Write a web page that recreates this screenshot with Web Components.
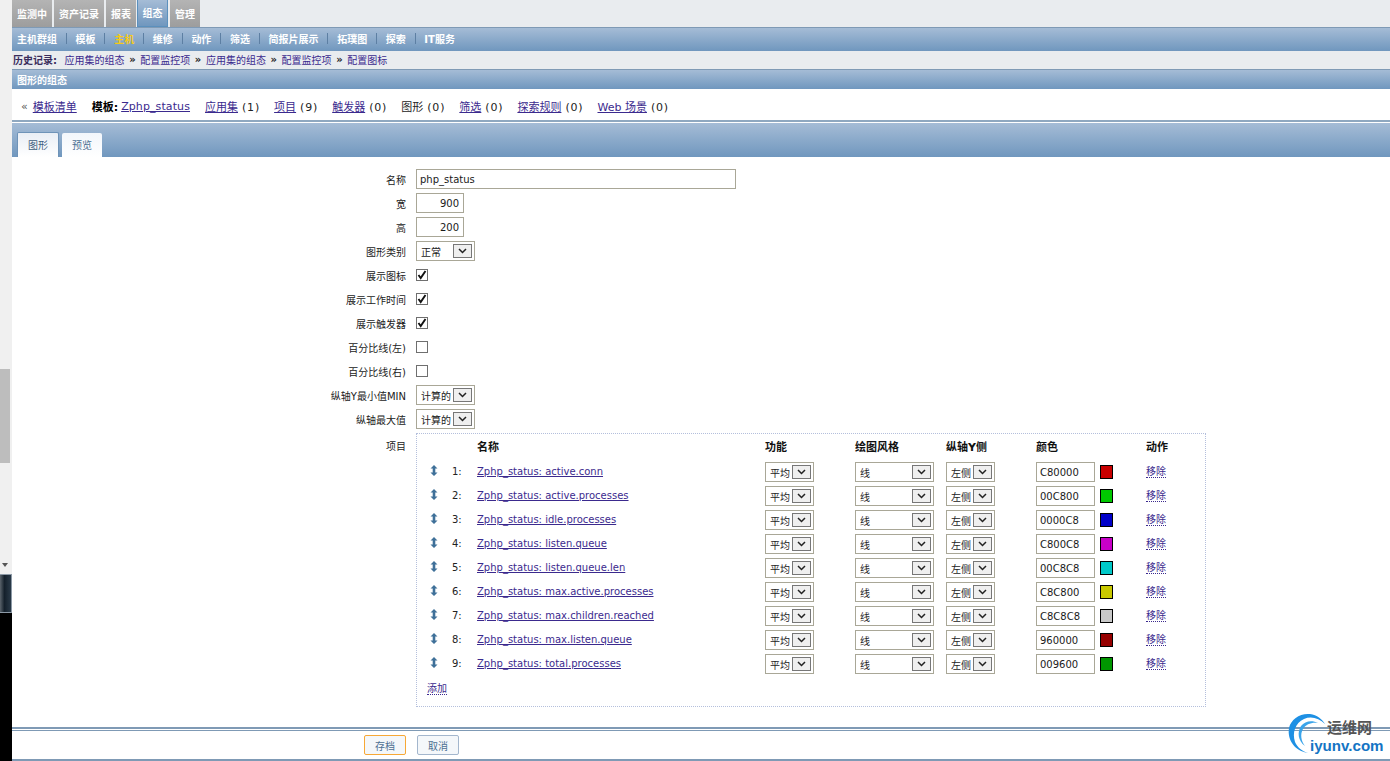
<!DOCTYPE html>
<html lang="zh">
<head>
<meta charset="utf-8">
<title>图形的组态</title>
<style>
  html, body { margin: 0; height: 100%; overflow: hidden; background: #fff; }
  body { font: 10px "DejaVu Sans", "Noto Sans CJK SC", sans-serif; color: #1a1a1a; }
</style>
</head>
<body>
<z-page></z-page>
<script>
const FONT = '"DejaVu Sans", "Noto Sans CJK SC", sans-serif';
const LINK = '#3b2a8e';
const BAR = 'linear-gradient(#a5bcd6, #7097be)';
const COLS = '25px 25px 288px 90px 91px 90px 110px 46px';

class ZStrip extends HTMLElement {
  connectedCallback() {
    this.attachShadow({ mode: 'open' });
    this.shadowRoot.innerHTML = `
      <style>
        :host { display: flex; flex-direction: column; width: 12px; height: 761px; background: #f0f0f0; flex: none; }
        .gap { height: 369px; }
        .thumb { width: 10px; height: 94px; background: #bdbdbd; }
        .rest { height: 111px; display: flex; align-items: flex-end; justify-content: center; padding-bottom: 6px; box-sizing: border-box; }
        .arrow { width: 0; height: 0; border: 3.5px solid transparent; border-top: 4px solid #555; border-bottom: 0; margin-bottom: 1px; margin-right: 3px; }
        .shot { height: 39px; box-sizing: border-box; border: 1px solid #8c99a6; border-left: 0; background: linear-gradient(90deg, #5a636b, #14202b 40%, #2a3a48); width: 12px; }
        .black { flex: 1; background: #000; }
      </style>
      <div class="gap"></div>
      <div class="thumb"></div>
      <div class="rest"><div class="arrow"></div></div>
      <div class="shot"></div>
      <div class="black"></div>`;
  }
}

class ZTopnav extends HTMLElement {
  connectedCallback() {
    const tabs = [['监测中', 40], ['资产记录', 50], ['报表', 30], ['组态', 31, 1], ['管理', 30]];
    this.attachShadow({ mode: 'open' });
    this.shadowRoot.innerHTML = `
      <style>
        :host { display: flex; gap: 1px; height: 27px; background: #e9ecef; font: bold 10px ${FONT}; color: #fff; }
        div { height: 27px; padding-bottom: 1px; display: flex; align-items: center; justify-content: center; background: linear-gradient(#b4b4b4, #9d9d9d); margin-right: 1px; box-sizing: border-box; }
        .on { background: linear-gradient(#a5bcd6, #7097be); border: 1px solid #5b90bd; border-top: 0; margin-right: 1px; margin-left: -1px; }
      </style>
      ${tabs.map(t => `<div class="${t[2] ? 'on' : ''}" style="width:${t[1]}px">${t[0]}</div>`).join('')}`;
  }
}

class ZSubnav extends HTMLElement {
  connectedCallback() {
    const items = ['主机群组', '模板', '主机', '维修', '动作', '筛选', '简报片展示', '拓璞图', '探索', 'IT服务'];
    this.attachShadow({ mode: 'open' });
    this.shadowRoot.innerHTML = `
      <style>
        :host { display: flex; align-items: center; height: 24px; box-sizing: border-box; padding: 0 0 2px 5px; background: ${BAR}; border-top: 1px solid #7f9ab5; font: bold 10px ${FONT}; color: #fff; }
        i { width: 1px; height: 11px; background: #5d7fa3; margin: 0 8.8px; }
        .on { color: #f6c915; }
      </style>
      ${items.map((t, n) => `${n ? '<i></i>' : ''}<span class="${t === '主机' ? 'on' : ''}">${t}</span>`).join('')}`;
  }
}

class ZCrumbs extends HTMLElement {
  connectedCallback() {
    const path = ['应用集的组态', '配置监控项', '应用集的组态', '配置监控项', '配置图标'];
    this.attachShadow({ mode: 'open' });
    this.shadowRoot.innerHTML = `
      <style>
        :host { display: flex; align-items: center; gap: 4.6px; height: 18px; box-sizing: border-box; padding: 0 0 2px 1px; background: #e9ecef; font: 10px ${FONT}; color: ${LINK}; }
        b { color: #222; }
        .history { color: #3a2d5c; margin-right: 3px; }
      </style>
      <b class="history">历史记录:</b>
      ${path.map((t, n) => `${n ? '<b>»</b>' : ''}<span>${t}</span>`).join('')}`;
  }
}

class ZTitlebar extends HTMLElement {
  connectedCallback() {
    this.attachShadow({ mode: 'open' });
    this.shadowRoot.innerHTML = `
      <style>
        :host { display: flex; align-items: center; height: 20px; box-sizing: border-box; padding: 0 0 1px 5px; background: ${BAR}; border-top: 1px solid #7f9ab5; font: bold 10px ${FONT}; color: #fff; }
      </style>
      <slot></slot>`;
  }
}

class ZLinks extends HTMLElement {
  connectedCallback() {
    const items = [['应用集', 1, 1], ['项目', 9, 1], ['触发器', 0, 1], ['图形', 0, 0], ['筛选', 0, 1], ['探索规则', 0, 1], ['Web 场景', 0, 1]];
    this.attachShadow({ mode: 'open' });
    this.shadowRoot.innerHTML = `
      <style>
        :host { display: flex; align-items: center; height: 33px; box-sizing: border-box; padding: 3px 0 0 9px; border-bottom: 2px solid #8fa8c0; background: #fff; font: 11px ${FONT}; color: #222; }
        a { color: ${LINK}; text-decoration: underline; }
        .back { color: #555; margin-right: 5px; }
        .host { margin: 0 3px 0 15px; font-weight: bold; color: #000; }
        .name { letter-spacing: .1px; }
        .item { margin-left: 15px; white-space: nowrap; }
        .item + .item { margin-left: 14.1px; }
        .item a, .item span { margin-right: 4px; }
        .count { letter-spacing: .8px; font-weight: normal; }
      </style>
      <span class="back">«</span><a>模板清单</a>
      <span class="host">模板:</span><a class="name">Zphp_status</a>
      ${items.map(i => `<div class="item">${i[2] ? `<a>${i[0]}</a>` : `<span>${i[0]}</span>`}<b class="count">(${i[1]})</b></div>`).join('')}`;
  }
}

class ZTabs extends HTMLElement {
  connectedCallback() {
    this.attachShadow({ mode: 'open' });
    this.shadowRoot.innerHTML = `
      <style>
        :host { display: flex; align-items: flex-end; gap: 3px; height: 34px; box-sizing: border-box; margin-top: 1px; padding-left: 5px; background: ${BAR}; font: 10px ${FONT}; }
        div { display: flex; align-items: center; justify-content: center; height: 24px; width: 40px; padding-bottom: 1px; box-sizing: border-box; background: linear-gradient(#f2f6fb, #fff); color: #4c6f92; border-radius: 2px 2px 0 0; }
        .on { height: 25px; width: 42px; background: linear-gradient(#e9eef5, #fff); border: 1px solid #6e93b8; border-bottom: 0; color: #3f5f80; }
      </style>
      <div class="on">图形</div><div>预览</div>`;
  }
}

class ZField extends HTMLElement {
  connectedCallback() {
    this.attachShadow({ mode: 'open' });
    this.shadowRoot.innerHTML = `
      <style>
        :host { display: grid; grid-template-columns: 394px 1fr; column-gap: 10px; align-items: center; min-height: 20px; font: 10px ${FONT}; color: #222; }
        :host([top]) { align-items: start; }
        :host([top]) .label { padding-top: 5px; }
        .label { text-align: right; white-space: nowrap; }
      </style>
      <div class="label">${this.getAttribute('label')}</div>
      <div><slot></slot></div>`;
  }
}

class ZInput extends HTMLElement {
  connectedCallback() {
    const right = this.hasAttribute('right');
    this.attachShadow({ mode: 'open' });
    this.shadowRoot.innerHTML = `
      <style>
        :host { display: block; box-sizing: border-box; height: 20px; width: ${this.getAttribute('w')}px; padding: 0 4px 0 3px; border: 1px solid #a9a797; background: #fff; font: 10px/20px ${FONT}; color: #1a1a1a; text-align: ${right ? 'right' : 'left'}; }
      </style>
      <slot></slot>`;
  }
}

class ZSelect extends HTMLElement {
  connectedCallback() {
    this.attachShadow({ mode: 'open' });
    this.shadowRoot.innerHTML = `
      <style>
        :host { display: flex; align-items: center; justify-content: space-between; box-sizing: border-box; height: 20px; width: ${this.getAttribute('w')}px; padding: 0 2px 0 4px; border: 1px solid #a9a797; background: #fff; font: 10px ${FONT}; color: #222; }
        .btn { display: flex; align-items: center; justify-content: center; width: 19px; height: 14px; box-sizing: border-box; border: 1px solid #777; background: #efefef; flex: none; }
      </style>
      <slot></slot>
      <div class="btn"><svg width="9" height="6" viewBox="0 0 9 6"><path d="M1 1l3.5 3.5L8 1" fill="none" stroke="#222" stroke-width="1.5"/></svg></div>`;
  }
}

class ZCheck extends HTMLElement {
  connectedCallback() {
    this.attachShadow({ mode: 'open' });
    this.shadowRoot.innerHTML = `
      <style>
        :host { display: block; box-sizing: border-box; width: 12px; height: 12px; border: 1px solid #6f6f6f; background: #fff; margin-top: -1px; }
        svg { display: block; }
      </style>
      ${this.hasAttribute('on') ? '<svg width="10" height="10" viewBox="0 0 10 10"><path d="M1.5 5l2.2 3L8.5 1" fill="none" stroke="#111" stroke-width="1.9"/></svg>' : ''}`;
  }
}

class ZItem extends HTMLElement {
  connectedCallback() {
    const a = n => this.getAttribute(n);
    this.attachShadow({ mode: 'open' });
    this.shadowRoot.innerHTML = `
      <style>
        :host { display: grid; grid-template-columns: ${COLS}; align-items: center; height: 20px; font: 10px ${FONT}; color: #222; }
        a { color: ${LINK}; text-decoration: underline; margin-top: -2px; }
        svg { display: block; margin: -3px 0 0 3px; }
        .num { margin-top: -2px; }
        .color { display: flex; gap: 5px; align-items: center; }
        .sw { width: 13px; height: 14px; box-sizing: border-box; border: 1px solid #000; background: #${a('color')}; }
        .rm { color: ${LINK}; border-bottom: 1px dotted ${LINK}; justify-self: start; line-height: 11px; }
      </style>
      <svg width="8" height="11" viewBox="0 0 8 11"><path d="M4 0L7.5 3.5H5.3V7.5H7.5L4 11L.5 7.5H2.7V3.5H.5Z" fill="#3f7099"/></svg>
      <span class="num">${a('n')}:</span>
      <a>Zphp_status: ${a('key')}</a>
      <z-select w="49">平均</z-select>
      <z-select w="79">线</z-select>
      <z-select w="49">左侧</z-select>
      <div class="color"><z-input w="59">${a('color')}</z-input><div class="sw"></div></div>
      <span class="rm">移除</span>`;
  }
}

class ZItems extends HTMLElement {
  connectedCallback() {
    const heads = ['', '', '名称', '功能', '绘图风格', '纵轴Y侧', '颜色', '动作'];
    const rows = [
      ['active.conn', 'C80000'], ['active.processes', '00C800'], ['idle.processes', '0000C8'],
      ['listen.queue', 'C800C8'], ['listen.queue.len', '00C8C8'], ['max.active.processes', 'C8C800'],
      ['max.children.reached', 'C8C8C8'], ['max.listen.queue', '960000'], ['total.processes', '009600']
    ];
    this.attachShadow({ mode: 'open' });
    this.shadowRoot.innerHTML = `
      <style>
        :host { display: flex; flex-direction: column; gap: 4px; box-sizing: border-box; width: 790px; height: 274px; padding: 4px 0 0 10px; border: 1px dotted #b4bfdc; font: 10px ${FONT}; }
        .head { display: grid; grid-template-columns: ${COLS}; align-items: center; height: 20px; box-sizing: border-box; padding-bottom: 4px; font: bold 11px ${FONT}; color: #111; }
        .add { align-self: flex-start; margin-top: 5px; color: ${LINK}; border-bottom: 1px dotted ${LINK}; line-height: 11px; }
      </style>
      <div class="head">${heads.map(h => `<span>${h}</span>`).join('')}</div>
      ${rows.map((r, i) => `<z-item n="${i + 1}" key="${r[0]}" color="${r[1]}"></z-item>`).join('')}
      <span class="add">添加</span>`;
  }
}

class ZForm extends HTMLElement {
  connectedCallback() {
    this.attachShadow({ mode: 'open' });
    this.shadowRoot.innerHTML = `
      <style>
        :host { display: flex; flex-direction: column; gap: 4px; height: 570px; box-sizing: border-box; padding: 12px 0 0 0; background: #fff; }
      </style>
      <z-field label="名称"><z-input w="320">php_status</z-input></z-field>
      <z-field label="宽"><z-input w="48" right>900</z-input></z-field>
      <z-field label="高"><z-input w="48" right>200</z-input></z-field>
      <z-field label="图形类别"><z-select w="59">正常</z-select></z-field>
      <z-field label="展示图标"><z-check on></z-check></z-field>
      <z-field label="展示工作时间"><z-check on></z-check></z-field>
      <z-field label="展示触发器"><z-check on></z-check></z-field>
      <z-field label="百分比线(左)"><z-check></z-check></z-field>
      <z-field label="百分比线(右)"><z-check></z-check></z-field>
      <z-field label="纵轴Y最小值MIN"><z-select w="59">计算的</z-select></z-field>
      <z-field label="纵轴最大值"><z-select w="59">计算的</z-select></z-field>
      <z-field label="项目" top><z-items></z-items></z-field>`;
  }
}

class ZFooter extends HTMLElement {
  connectedCallback() {
    this.attachShadow({ mode: 'open' });
    this.shadowRoot.innerHTML = `
      <style>
        :host { display: flex; gap: 11px; height: 34px; box-sizing: border-box; padding: 6px 0 0 352px; border-top: 2px solid #7f9ab5; border-bottom: 2px solid #7f9ab5; position: relative; background: #fff; font: 10px ${FONT}; }
        :host::before { content: ""; position: absolute; left: 0; right: 0; top: 1px; height: 1px; background: #7f9ab5; }
        div { display: flex; align-items: center; justify-content: center; width: 42px; height: 20px; box-sizing: border-box; border: 1px solid #a3b6cd; border-radius: 2px; background: #f4f7fa; color: #4c6f92; }
        .save { border-color: #f7a836; }
      </style>
      <div class="save">存档</div><div>取消</div>`;
  }
}

class ZMark extends HTMLElement {
  connectedCallback() {
    this.attachShadow({ mode: 'open' });
    this.shadowRoot.innerHTML = `
      <style>
        :host { position: absolute; left: 1287px; top: 713px; width: 103px; height: 44px; }
        svg { position: absolute; left: 0; top: 0; }
        .cn { position: absolute; left: 40px; top: 5px; font: bold 15px/18px "Noto Sans CJK SC", sans-serif; color: #555; white-space: nowrap; }
        .en { position: absolute; left: 23px; top: 24px; font: bold 15.1px/18px "Liberation Sans", sans-serif; color: #1474c4; white-space: nowrap; }
      </style>
      <svg width="44" height="44" viewBox="0 0 44 44">
        <path d="M21 40C8 38 0 27 2 15C4 6 13 0 23 1C30 2 35 6 38 11C32 5 24 3 17 6C8 10 5 20 8 29C10 34 15 38 21 40Z" fill="#1e90e4"/>
        <path d="M18 33C11 28 10 19 14 13C18 8 25 7 31 10C25 9 19 11 16 16C13 21 14 28 18 33Z" fill="#3aa4ea"/>
      </svg>
      <div class="cn">运维网</div>
      <div class="en">iyunv.com</div>`;
  }
}

class ZPage extends HTMLElement {
  connectedCallback() {
    this.attachShadow({ mode: 'open' });
    this.shadowRoot.innerHTML = `
      <style>
        :host { display: flex; width: 1390px; height: 761px; overflow: hidden; position: relative; }
        main { flex: 1; min-width: 0; display: flex; flex-direction: column; }
      </style>
      <z-strip></z-strip>
      <main>
        <z-topnav></z-topnav>
        <z-subnav></z-subnav>
        <z-crumbs></z-crumbs>
        <z-titlebar>图形的组态</z-titlebar>
        <z-links></z-links>
        <z-tabs></z-tabs>
        <z-form></z-form>
        <z-footer></z-footer>
      </main>
      <z-mark></z-mark>`;
  }
}

[['z-strip', ZStrip], ['z-topnav', ZTopnav], ['z-subnav', ZSubnav], ['z-crumbs', ZCrumbs],
 ['z-titlebar', ZTitlebar], ['z-links', ZLinks], ['z-tabs', ZTabs], ['z-field', ZField],
 ['z-input', ZInput], ['z-select', ZSelect], ['z-check', ZCheck], ['z-item', ZItem],
 ['z-items', ZItems], ['z-form', ZForm], ['z-footer', ZFooter], ['z-mark', ZMark], ['z-page', ZPage]]
  .forEach(d => customElements.define(d[0], d[1]));
</script>
</body>
</html>
